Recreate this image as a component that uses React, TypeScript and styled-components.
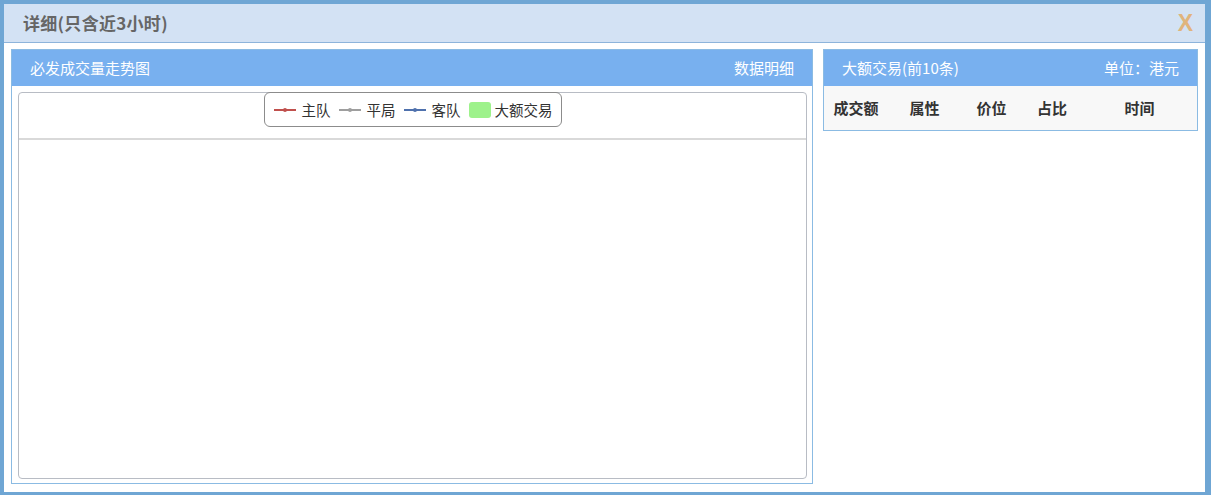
import React from "react";
import styled, { createGlobalStyle } from "styled-components";

const GlobalStyle = createGlobalStyle`
  html, body { margin: 0; padding: 0; background: #fff; }
  body { font-family: "Noto Sans CJK SC", "Noto Sans", sans-serif; }
  * { box-sizing: border-box; }
`;

const Frame = styled.div`
  width: 1211px;
  height: 495px;
  background: #6fa6d4;
  padding: 4px 6px 3px 4px;
`;

const Window = styled.div`
  width: 100%;
  height: 100%;
  background: #fff;
  display: flex;
  flex-direction: column;
`;

const TitleBar = styled.div`
  height: 39px;
  flex: none;
  background: #d3e2f4;
  border-bottom: 1px solid #8db4db;
  display: flex;
  align-items: center;
  justify-content: space-between;
  padding: 0 12px 0 19px;
`;

const Title = styled.div`
  font-size: 17px;
  font-weight: bold;
  color: #666;
  line-height: 20px;
  letter-spacing: 0.3px;
`;

const Close = styled.div`
  font-family: "Liberation Sans", Arial, sans-serif;
  font-size: 23px;
  font-weight: bold;
  color: #e0b47c;
  line-height: 24px;
  cursor: pointer;
`;

const Body = styled.div`
  display: flex;
  align-items: flex-start;
  gap: 10px;
  padding: 6px 7px 0 7px;
`;

const Panel = styled.div<{ $width: number; $height?: number }>`
  width: ${(p) => p.$width}px;
  ${(p) => (p.$height ? `height: ${p.$height}px;` : "")}
  border: 1px solid #8bbbe3;
  display: flex;
  flex-direction: column;
`;

const PanelHeader = styled.div`
  height: 36px;
  flex: none;
  background: #78b0ef;
  color: #fff;
  font-size: 15px;
  line-height: 20px;
  display: flex;
  align-items: center;
  justify-content: space-between;
  padding: 0 18px 0 18px;
`;

const ChartWrap = styled.div`
  flex: 1;
  padding: 6px 5px 4px 6px;
  display: flex;
`;

const ChartBox = styled.div`
  flex: 1;
  border: 1px solid #b8bcc4;
  border-radius: 4px;
  display: flex;
  flex-direction: column;
`;

const LegendArea = styled.div`
  height: 47px;
  flex: none;
  border-bottom: 2px solid #d9d9d9;
  display: flex;
  justify-content: center;
  align-items: flex-start;
`;

const Legend = styled.div`
  margin-top: -1px;
  height: 35px;
  border: 1px solid #8c8c8c;
  border-radius: 6px;
  display: flex;
  align-items: center;
  padding: 0 8px 0 9px;
  gap: 8px;
  font-size: 14.5px;
  color: #333;
  line-height: 18px;
`;

const LegendItem = styled.div`
  display: flex;
  align-items: center;
  gap: 6px;
`;

const LineMark = styled.span<{ $color: string }>`
  position: relative;
  display: inline-block;
  width: 22px;
  height: 2px;
  background: ${(p) => p.$color};
  &::after {
    content: "";
    position: absolute;
    left: 9px;
    top: -1px;
    width: 4px;
    height: 4px;
    border-radius: 50%;
    background: ${(p) => p.$color};
  }
`;

const BoxMark = styled.span`
  display: inline-block;
  width: 22px;
  height: 16px;
  border-radius: 3px;
  background: #9df28b;
  margin-right: -2px;
`;

const TableHead = styled.div`
  height: 44px;
  background: #f8f8f8;
  display: grid;
  grid-template-columns: 64px 73px 61px 60px 1fr;
  align-items: center;
  font-size: 15px;
  font-weight: bold;
  color: #333;
  line-height: 20px;
`;

const Th = styled.div`
  text-align: center;
`;

export default function App() {
  return (
    <>
      <GlobalStyle />
      <Frame>
        <Window>
          <TitleBar>
            <Title>详细(只含近3小时)</Title>
            <Close>X</Close>
          </TitleBar>
          <Body>
            <Panel $width={802} $height={435}>
              <PanelHeader>
                <span>必发成交量走势图</span>
                <span>数据明细</span>
              </PanelHeader>
              <ChartWrap>
                <ChartBox>
                  <LegendArea>
                    <Legend>
                      <LegendItem>
                        <LineMark $color="#c0504d" />
                        <span>主队</span>
                      </LegendItem>
                      <LegendItem>
                        <LineMark $color="#9e9e9e" />
                        <span>平局</span>
                      </LegendItem>
                      <LegendItem>
                        <LineMark $color="#4f71ad" />
                        <span>客队</span>
                      </LegendItem>
                      <LegendItem>
                        <BoxMark />
                        <span>大额交易</span>
                      </LegendItem>
                    </Legend>
                  </LegendArea>
                </ChartBox>
              </ChartWrap>
            </Panel>
            <Panel $width={375}>
              <PanelHeader>
                <span>大额交易(前10条)</span>
                <span>单位：港元</span>
              </PanelHeader>
              <TableHead>
                <Th>成交额</Th>
                <Th>属性</Th>
                <Th>价位</Th>
                <Th>占比</Th>
                <Th>时间</Th>
              </TableHead>
            </Panel>
          </Body>
        </Window>
      </Frame>
    </>
  );
}
